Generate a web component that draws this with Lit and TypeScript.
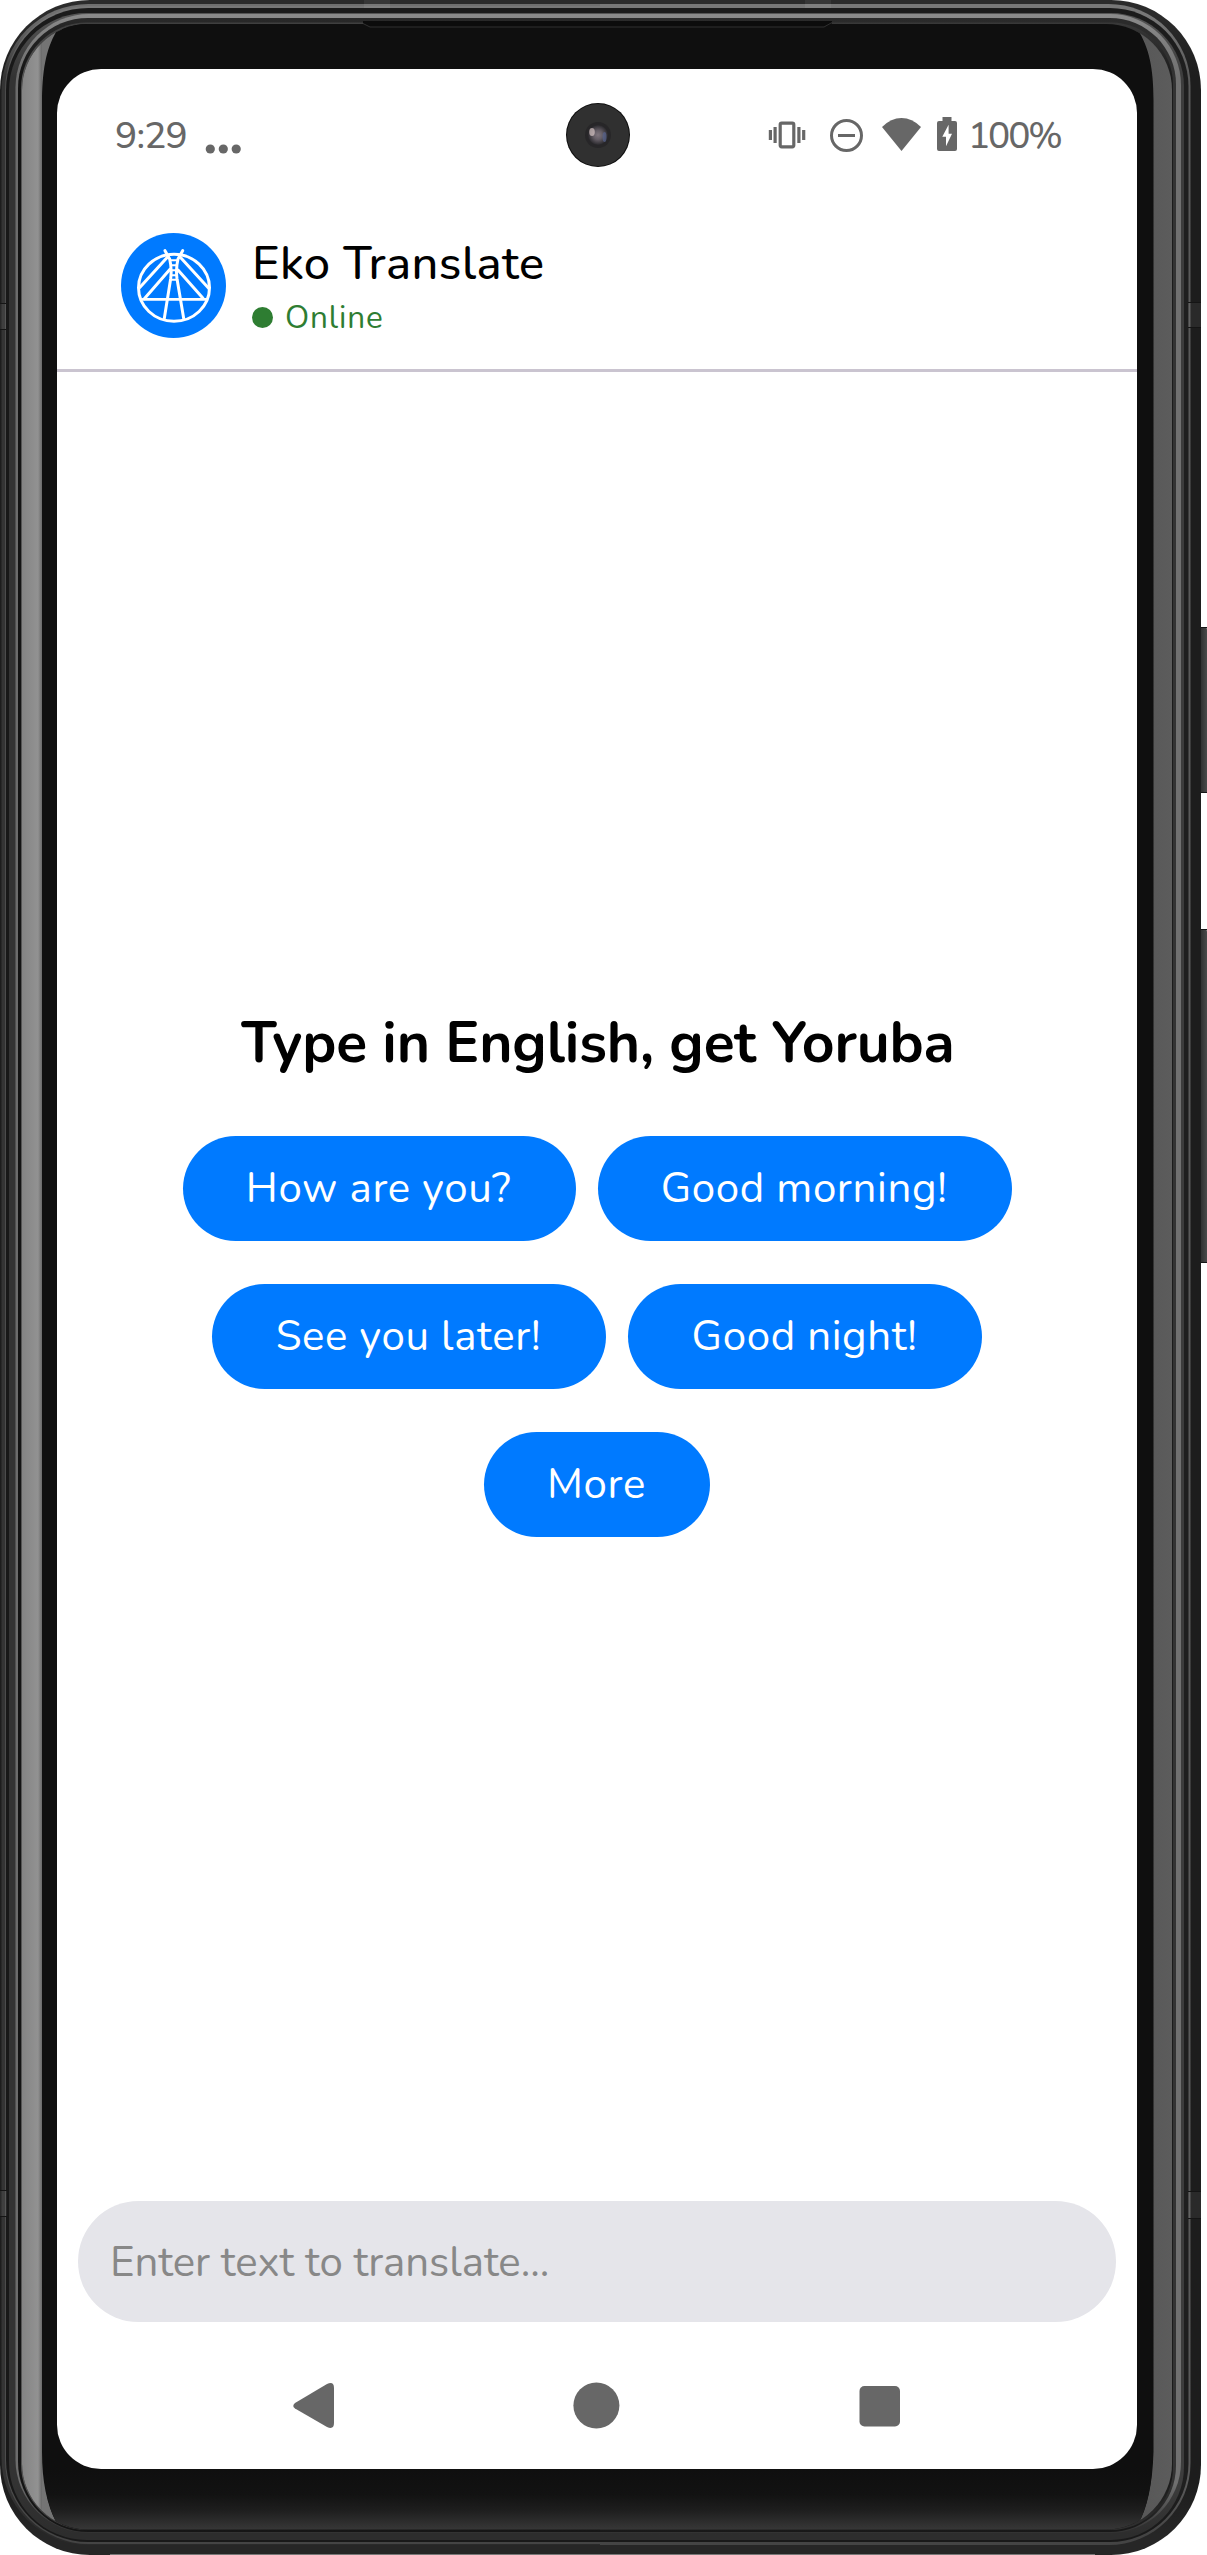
import { LitElement, html, css, svg } from "lit";
import { customElement } from "lit/decorators.js";

type Ring = { x: number; t: number; b: number; side: string; top: string; bottom: string };

const leftRings: Ring[] = [
  { x: 0, t: 0, b: 0, side: "#1d1d1d", top: "#2b2b2b", bottom: "#262626" },
  { x: 1.5, t: 4, b: 10, side: "#343434", top: "#6f6f6f", bottom: "#2a2a2a" },
  { x: 5, t: 6, b: 11, side: "#4c4c4c", top: "#777777", bottom: "#444444" },
  { x: 6, t: 8, b: 13, side: "#181818", top: "#1b1b1b", bottom: "#191919" },
  { x: 9, t: 13, b: 15, side: "#333333", top: "#555555", bottom: "#2d2d2d" },
  { x: 15.5, t: 14, b: 22, side: "#6c6c6c", top: "#8a8a8a", bottom: "#303030" },
  { x: 18, t: 18, b: 23, side: "#141414", top: "#2a2a2a", bottom: "#161616" },
  { x: 21, t: 22.5, b: 25, side: "#555555", top: "#3c3c3c", bottom: "#333333" },
];

const rightRings: Ring[] = [
  { x: 0, t: 0, b: 0, side: "#1d1d1d", top: "#2b2b2b", bottom: "#262626" },
  { x: 10.5, t: 4, b: 10, side: "#5a5a5a", top: "#777777", bottom: "#444444" },
  { x: 12.5, t: 8, b: 13, side: "#1f1f1f", top: "#1b1b1b", bottom: "#191919" },
  { x: 17, t: 13, b: 15, side: "#3d3d3d", top: "#555555", bottom: "#2d2d2d" },
  { x: 20, t: 14, b: 22, side: "#707070", top: "#8a8a8a", bottom: "#303030" },
  { x: 25, t: 18, b: 23, side: "#333333", top: "#2a2a2a", bottom: "#161616" },
  { x: 28, t: 22.5, b: 25, side: "#1b1b1b", top: "#3c3c3c", bottom: "#333333" },
];

const BODY_W = 1201;
const BODY_H = 2555;

const rings = (list: Ring[], key: string) =>
  list.map((r, i) => {
    const left = key === "l" ? r.x : 15;
    const right = key === "r" ? r.x : 15;
    const radius = Math.max(60, 90 - (r.x + r.t) / 1.8);
    return svg`
      <linearGradient id=${`${key}${i}`} gradientUnits="userSpaceOnUse" x1="0" y1="0" x2="0" y2=${BODY_H}>
        <stop offset="0.006" stop-color=${r.top} />
        <stop offset="0.03" stop-color=${r.side} />
        <stop offset="0.972" stop-color=${r.side} />
        <stop offset="0.992" stop-color=${r.bottom} />
      </linearGradient>
      <rect x=${left} y=${r.t} width=${BODY_W - left - right} height=${BODY_H - r.t - r.b}
        rx=${radius} fill=${`url(#${key}${i})`} />`;
  });

@customElement("phone-frame")
export class PhoneFrame extends LitElement {
  static styles = css`
    :host,
    .frame {
      display: block;
      width: 1207px;
      height: 2555px;
    }
  `;

  render() {
    return html`<svg class="frame" viewBox="0 0 1207 2555" aria-hidden="true">
      <defs>
        <clipPath id="halfL"><rect width="600" height="2555" /></clipPath>
        <clipPath id="halfR"><rect x="600" width="607" height="2555" /></clipPath>
        <clipPath id="glass"><rect x="22" y="24" width="1150" height="2505.500" rx="66" /></clipPath>
        <linearGradient id="btn"><stop stop-color="#1c1c1c" /><stop offset="1" stop-color="#4a4a4a" /></linearGradient>
        <linearGradient id="bevelL"><stop stop-color="#848484" /><stop offset=".8" stop-color="#929292" /><stop offset="1" stop-color="#686868" /></linearGradient>
        <linearGradient id="bevelR"><stop stop-color="#4f4f4f" /><stop offset=".15" stop-color="#585858" /><stop offset="1" stop-color="#5c5c5c" /></linearGradient>
        <linearGradient id="sheen" x2="0" y2="1"><stop stop-color="#0f0f0f" /><stop offset=".4" stop-color="#121212" /><stop offset=".65" stop-color="#1e1e1e" /><stop offset="1" stop-color="#3a3a3a" /></linearGradient>
      </defs>
      <path d="M1196 627h9q2 0 2 3v163h-11zM1196 929h9q2 0 2 3v331h-11z" fill="url(#btn)" />
      <path d="M1201 627.500h6M1201 929.500h6M1201 792.500h6M1201 1262.500h6" stroke="#151515" />
      <g clip-path="url(#halfL)">${rings(leftRings, "l")}</g>
      <g clip-path="url(#halfR)">${rings(rightRings, "r")}</g>
      <g fill="#fff" fill-opacity=".06">
        <path d="M364 0h26v8h-26zM805 0h26v8h-26zM0 303h6v27H0zM1188 302h13v26h-13zM0 2190h7v27H0zM1188 2191h13v27h-13z" />
      </g>
      <path d="M0 303.500h6M0 329.500h6M1188 302.500h13M1188 327.500h13M0 2190.500h7M0 2216.500h7M1188 2191.500h13M1188 2218.500h13" stroke="#151515" />
      <g clip-path="url(#glass)">
        <rect x="22" y="24" width="578" height="2506" fill="#0f0f0f" />
        <rect x="22" y="24" width="20" height="2506" fill="url(#bevelL)" />
        <rect x="42" y="24" width="20" height="2506" fill="#747474" />
        <rect x="1135" y="24" width="37" height="2506" fill="url(#bevelR)" />
        <path d="M42 105C42 70 46 50 56 32V20H1138V30C1149 48 1153.500 68 1153.500 100V2452Q1152 2500 1138 2524V2532H56V2522Q42 2495 42 2452Z" fill="#0f0f0f" />
        <path d="M44 2470H1152Q1149 2505 1138 2524V2532H56V2522Q45 2500 44 2470Z" fill="url(#sheen)" />
      </g>
      <path d="M363 23.500L370 27H824L832 23.500V21H363Z" fill="#0c0c0c" />
      <path d="M363 23.500L370 27H824L832 22.500" fill="none" stroke="#303030" />
      <path d="M110 2554.500H1095" stroke="#777" />
    </svg>`;
  }
}

@customElement("app-root")
export class AppRoot extends LitElement {
  static styles = css`
    :host {
      display: block;
      width: 1207px;
      height: 2555px;
      background: #fff;
      font-family: Nunito, Lato, "Open Sans", sans-serif;
    }
    * {
      box-sizing: border-box;
    }
    .phone {
      position: relative;
      width: 1207px;
      height: 2555px;
      padding: 69px 70px 86px 57px;
    }
    phone-frame {
      position: absolute;
      left: 0;
      top: 0;
    }
    .screen {
      position: relative;
      display: flex;
      flex-direction: column;
      width: 1080px;
      height: 2400px;
      border-radius: 44px;
      background: #fff;
      overflow: hidden;
    }
    .status {
      display: flex;
      align-items: center;
      height: 132px;
      padding: 0 75px 0 58px;
      color: #676767;
      font-size: 37px;
      font-weight: 550;
      line-height: 44px;
    }
    .time {
      width: 90px;
      padding-top: 2px;
      letter-spacing: -0.8px;
    }
    .dots {
      width: 40px;
      height: 12px;
      margin-top: 28px;
    }
    .tray {
      width: 192px;
      height: 40px;
      margin-left: auto;
      margin-right: 9px;
    }
    .percent {
      width: 94px;
      padding-top: 2px;
      letter-spacing: -2.1px;
      white-space: nowrap;
    }
    .camera {
      position: absolute;
      left: 509px;
      top: 34px;
      width: 64px;
      height: 64px;
    }
    .header {
      display: flex;
      align-items: center;
      gap: 26px;
      height: 171px;
      padding: 0 64px;
      border-bottom: 3px solid #cac4d0;
    }
    .avatar {
      width: 105px;
      height: 105px;
    }
    .who {
      display: flex;
      flex-direction: column;
      padding-top: 5px;
    }
    .name {
      font-size: 47px;
      line-height: 60px;
      font-weight: 550;
      color: #000;
      letter-spacing: 0.45px;
    }
    .presence {
      display: flex;
      align-items: center;
      gap: 12px;
      height: 48px;
      color: #2e7d32;
      font-size: 31.5px;
      letter-spacing: 0.9px;
    }
    .dot {
      width: 21px;
      height: 21px;
      border-radius: 50%;
      background: #2e7d32;
    }
    .main {
      flex: 1;
      display: flex;
      flex-direction: column;
      align-items: center;
      padding-top: 632px;
    }
    .title {
      margin: 0 0 54px;
      padding-left: 2px;
      font-size: 57px;
      line-height: 78px;
      font-weight: 700;
      color: #000;
      letter-spacing: -0.13px;
      white-space: nowrap;
    }
    .chips {
      display: flex;
      flex-direction: column;
      align-items: center;
      gap: 43px;
    }
    .row {
      display: flex;
      gap: 22px;
    }
    .chip {
      height: 105px;
      padding: 0 1px 0 0;
      border: 0;
      border-radius: 53px;
      background: #007aff;
      color: #fff;
      font: inherit;
      font-size: 42px;
      letter-spacing: 0.63px;
      white-space: nowrap;
    }
    .field {
      display: flex;
      align-items: center;
      height: 121px;
      margin: 0 21px;
      padding: 1px 32px 0;
      border-radius: 61px;
      background: #e5e5ea;
      color: #888;
      font-size: 42px;
      letter-spacing: -0.03px;
      white-space: nowrap;
    }
    .nav {
      display: flex;
      align-items: center;
      height: 147px;
      padding: 21px 236px 0;
      justify-content: space-between;
      fill: #676767;
    }
    .key {
      width: 48px;
      height: 48px;
    }
  `;

  private rows = [
    [
      { label: "How are you?", width: 393 },
      { label: "Good morning!", width: 414 },
    ],
    [
      { label: "See you later!", width: 394 },
      { label: "Good night!", width: 354 },
    ],
    [{ label: "More", width: 226 }],
  ];

  render() {
    return html`
      <div class="phone">
        <phone-frame></phone-frame>
        <div class="screen">
          <div class="status">
            <span class="time">9:29</span>
            <svg class="dots" viewBox="0 0 40 12" fill="#676767">
              <circle cx="5.300" cy="6" r="4.600" /><circle cx="18.300" cy="6" r="4.600" /><circle cx="31.200" cy="6" r="4.600" />
            </svg>
            <svg class="tray" viewBox="767 115 192 40" fill="#676767">
              <rect x="780.200" y="123.200" width="13.600" height="23.600" rx="1.500" fill="none" stroke="#676767" stroke-width="3.200" />
              <path d="M773.500 127h3.200v16h-3.200zM797.300 127h3.200v16h-3.200zM768.800 130h3.200v10h-3.200zM802.100 130h3.200v10h-3.200z" />
              <circle cx="846.500" cy="135.500" r="15" fill="none" stroke="#676767" stroke-width="3" />
              <path d="M838 134h17v3h-17z" />
              <path d="M882 127Q891 118 901.500 118T921 127L901.500 151Z" />
              <path fill-rule="evenodd" d="M942.500 117h9v4h3.500q2 0 2 2v26q0 2-2 2h-16q-2 0-2-2v-26q0-2 2-2h3.500zM948.600 124.700L942.300 136.700H946V146.300L952 133.700H948.600Z" />
            </svg>
            <span class="percent">100%</span>
          </div>
          <svg class="camera" viewBox="0 0 64 64">
            <defs>
              <radialGradient id="lens">
                <stop stop-color="#80767e" /><stop offset=".45" stop-color="#655e66" /><stop offset="1" stop-color="#2a292d" />
              </radialGradient>
            </defs>
            <circle cx="32" cy="32" r="32" fill="#0d0d0d" />
            <circle cx="32" cy="32" r="31" fill="#303030" />
            <circle cx="32" cy="32" r="13" fill="#272628" />
            <circle cx="32" cy="32" r="10" fill="url(#lens)" />
            <ellipse cx="26" cy="29" rx="2.800" ry="4" fill="#e2cfce" opacity=".65" />
            <ellipse cx="38.500" cy="34" rx="2" ry="5" fill="#586593" opacity=".65" />
          </svg>
          <header class="header">
            <svg class="avatar" viewBox="33 39 315 315">
              <circle cx="190.500" cy="196.500" r="157.500" fill="#007aff" />
              <g fill="none" stroke="#fff" stroke-width="9" stroke-linecap="round" stroke-linejoin="round">
                <ellipse cx="192" cy="203.500" rx="106.500" ry="100.500" />
                <path d="M165 92L179 117Q186 146 182 176L163 295M218 92L204 117Q197 146 201 176L221 295" />
                <path d="M172 112L90 202M180 148L103 236M211 112L296 205M204 150L279 235" />
                <path d="M98 238H198M186 238H288" stroke-width="8" />
                <path d="M180 121H203M184 136H200M185 151H199M183 166H201M182 179H202" stroke-width="6" />
              </g>
            </svg>
            <div class="who">
              <span class="name">Eko Translate</span>
              <span class="presence"><i class="dot"></i>Online</span>
            </div>
          </header>
          <main class="main">
            <h1 class="title">Type in English, get Yoruba</h1>
            <div class="chips">
              ${this.rows.map(
                (row) => html`<div class="row">
                  ${row.map(
                    (chip) => html`<button class="chip" style="width:${chip.width}px">${chip.label}</button>`
                  )}
                </div>`
              )}
            </div>
          </main>
          <div class="field">Enter text to translate...</div>
          <nav class="nav">
            <svg class="key" viewBox="0 0 48 48">
              <path d="M2 21L34 2Q41 -1 41 6V41Q41 48 34 45L2 26.500Q-1.500 24 2 21Z" />
            </svg>
            <svg class="key" viewBox="0 0 48 48"><circle cx="23.400" cy="23.500" r="23" /></svg>
            <svg class="key" viewBox="0 0 48 48"><rect x="6.500" y="4" width="40.500" height="40.500" rx="5" /></svg>
          </nav>
        </div>
      </div>
    `;
  }
}
